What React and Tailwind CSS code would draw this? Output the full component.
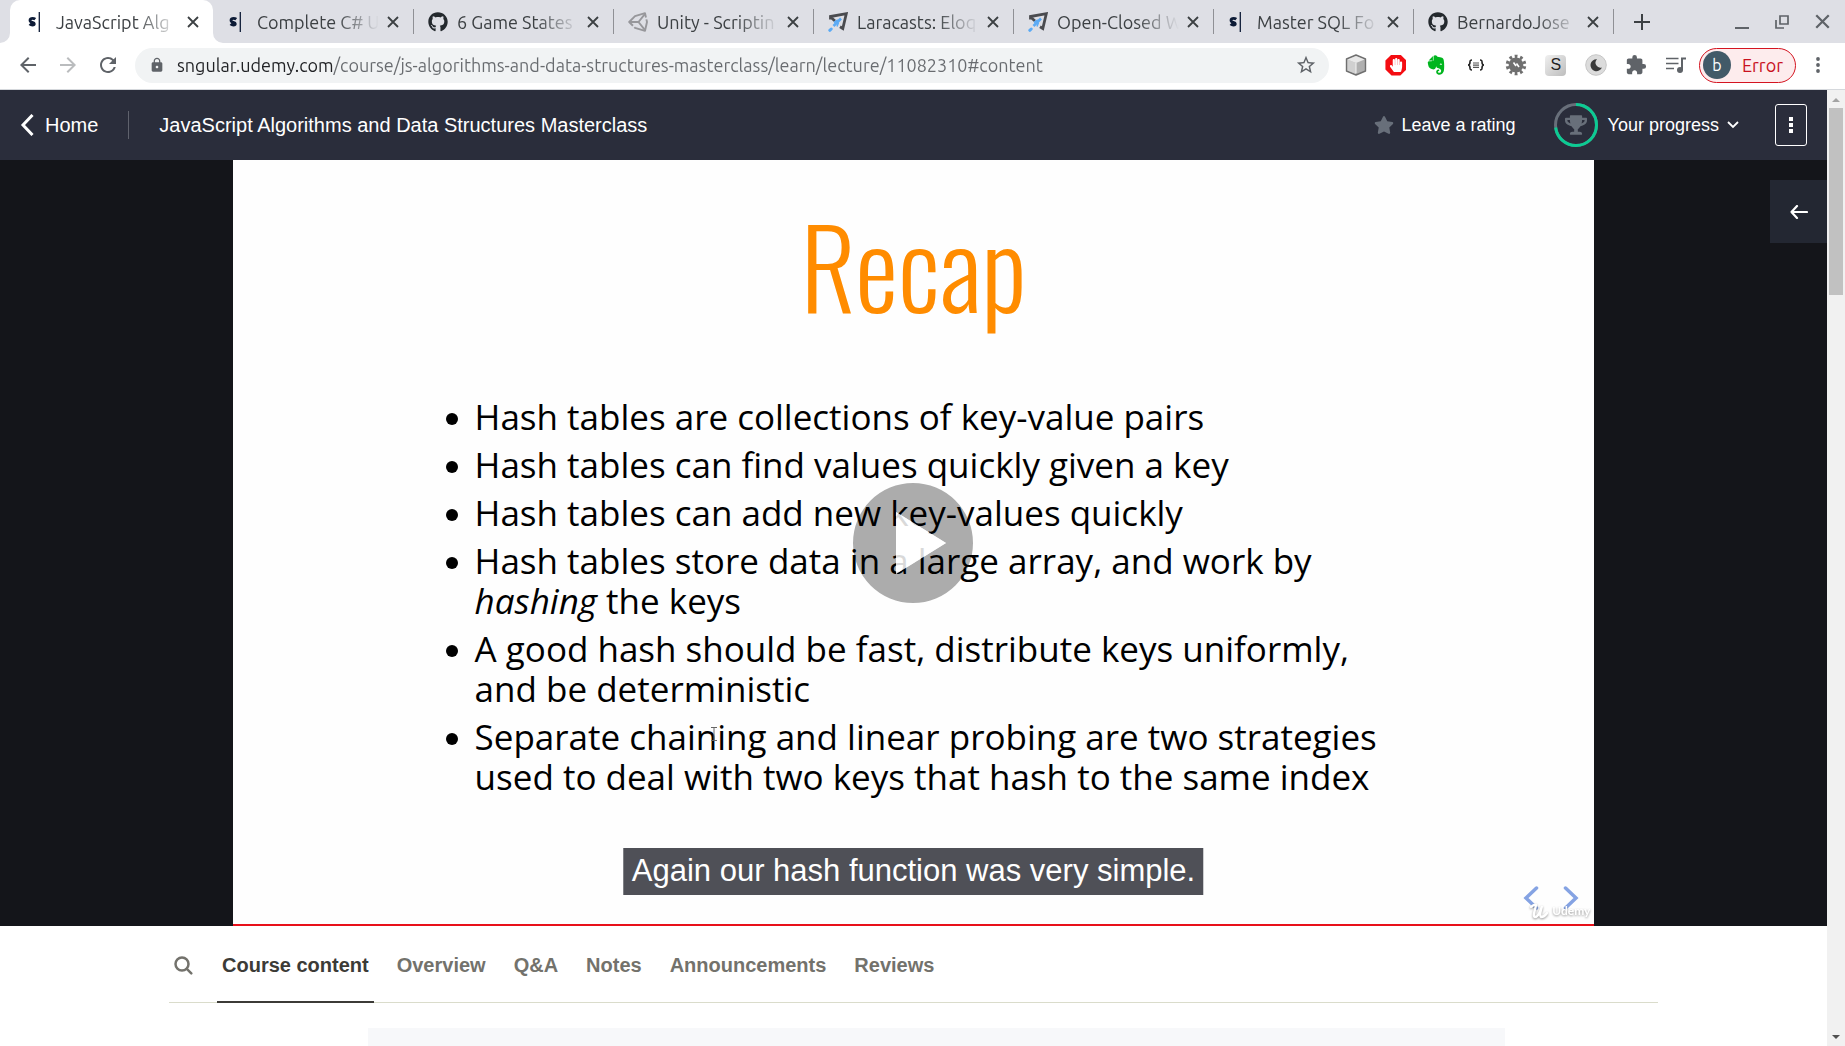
import React from "react";
import { FaGithub, FaEvernote, FaTrophy, FaStar, FaHandPaper } from "react-icons/fa";
import {
  MdArrowBack,
  MdArrowForward,
  MdRefresh,
  MdLock,
  MdStarBorder,
  MdExtension,
} from "react-icons/md";

function SngularIcon() {
  return (
    <svg viewBox="0 0 20 20" className="h-5 w-5" aria-hidden="true">
      <path d="M8.300 7.200C7.500 6.600 6.500 6.300 5.500 6.300c-1.500 0-2.500.8-2.500 2 0 2.900 4.300 1.500 4.300 3.500 0 .9-.9 1.300-1.900 1.300-1 0-2-.4-2.900-1.100" fill="none" stroke="#0d1b36" strokeWidth="2.800" />
      <path d="M12.300 0v20" stroke="#0d1b36" strokeWidth="1.300" />
    </svg>
  );
}

function UnityIcon() {
  return (
    <svg viewBox="0 0 20 20" className="h-5 w-5" fill="none" stroke="#97979b" strokeWidth="1.900" strokeLinejoin="round" aria-hidden="true">
      <path d="M1.200 10 7 4.200 17 1.200 19 10 17 18.800 7 15.800z" strokeDasharray="23 2" />
      <path d="M1.200 10h9.300M10.500 10 17 1.800M10.500 10 17 18.200" />
    </svg>
  );
}

function LaracastsIcon() {
  return (
    <svg viewBox="0 0 20 20" className="h-5 w-5" fill="none" aria-hidden="true">
      <path d="M2.500 7.500V4.500L18.300 1.700 14.800 16.500 12 14.800M2.500 5l4.500 4" stroke="#4a4b4f" strokeWidth="2.800" />
      <path d="M13 6.500 5.500 14" stroke="#5aaaf5" strokeWidth="2.600" />
      <path d="M10.500 10.500 9 14.500M9.800 8 6 10.500" stroke="#5aaaf5" strokeWidth="1.500" />
      <path d="M3.200 17 1.800 18.300" stroke="#5aaaf5" strokeWidth="3" strokeLinecap="round" />
    </svg>
  );
}

function GithubIcon() {
  return <FaGithub className="h-5 w-5 text-[#24292e]" />;
}

function Cross({ className }) {
  return (
    <svg viewBox="0 0 12 12" className={className} fill="none" stroke="currentColor" strokeWidth="1.800" aria-hidden="true">
      <path d="M1 1 11 11M11 1 1 11" />
    </svg>
  );
}

const browserTabs = [
  { title: "JavaScript Alg", Icon: SngularIcon, active: true },
  { title: "Complete C# U", Icon: SngularIcon },
  { title: "6 Game States", Icon: GithubIcon },
  { title: "Unity - Scriptin", Icon: UnityIcon },
  { title: "Laracasts: Eloq", Icon: LaracastsIcon },
  { title: "Open-Closed W", Icon: LaracastsIcon },
  { title: "Master SQL Fo", Icon: SngularIcon },
  { title: "BernardoJose", Icon: GithubIcon },
];

function BrowserTab({ tab }) {
  const { Icon, title, active } = tab;
  return (
    <div
      className={
        active
          ? "relative flex h-full w-[203px] min-w-0 items-center rounded-t-[10px] bg-white pr-[10px] pl-[17px]"
          : "relative flex h-full w-[200px] min-w-0 items-center pr-[10px] pl-[15px]"
      }
    >
      <button type="button" className="flex min-w-0 flex-1 items-center gap-[9px] text-[#3c4043]">
        <span className="shrink-0"><Icon /></span>
        <span className="min-w-0 flex-1 overflow-hidden text-left text-[18px] leading-6 whitespace-nowrap [mask-image:linear-gradient(to_right,black_65%,transparent)]">
          {title}
        </span>
      </button>
      <button type="button" aria-label={"Close " + title} className="ml-1 flex h-5 w-5 shrink-0 items-center justify-center text-[#3c4043]">
        <Cross className="h-3 w-3" />
      </button>
      {active ? (
        <>
          <svg viewBox="0 0 10 10" className="absolute bottom-0 -left-[10px] h-[10px] w-[10px]"><path d="M10 0v10H0A10 10 0 0 0 10 0" fill="#fff" /></svg>
          <svg viewBox="0 0 10 10" className="absolute -right-[10px] bottom-0 h-[10px] w-[10px]"><path d="M0 0v10h10A10 10 0 0 1 0 0" fill="#fff" /></svg>
        </>
      ) : null}
    </div>
  );
}

function TabStrip() {
  return (
    <div className="flex h-[43px] shrink-0 items-center bg-[#dedfe5] pr-[11px] pl-[10px]">
      {browserTabs.map((tab, i) => (
        <React.Fragment key={tab.title}>
          {i > 1 ? <span className="-mr-px h-[25px] w-px shrink-0 bg-[#8f9095]" /> : null}
          <BrowserTab tab={tab} />
        </React.Fragment>
      ))}
      <span className="h-[25px] w-px shrink-0 bg-[#8f9095]" />
      <button type="button" aria-label="New tab" className="ml-4 flex h-6 w-6 items-center justify-center">
        <svg viewBox="0 0 16 16" className="h-4 w-4" stroke="#3c4043" strokeWidth="2"><path d="M8 0v16M0 8h16" /></svg>
      </button>
      <div className="ml-auto flex items-center gap-4 text-[#5f6368]">
        <button type="button" aria-label="Minimize" className="flex h-6 w-6 items-center justify-center">
          <svg viewBox="0 0 14 14" className="h-[14px] w-[14px]" stroke="currentColor" strokeWidth="2"><path d="M0 13h14" /></svg>
        </button>
        <button type="button" aria-label="Restore" className="flex h-6 w-6 items-center justify-center">
          <svg viewBox="0 0 14 14" className="h-[14px] w-[14px]" fill="none" stroke="currentColor" strokeWidth="1.700"><path d="M5 1h8v8H5zM1 5v8h8" /></svg>
        </button>
        <button type="button" aria-label="Close window" className="flex h-6 w-6 items-center justify-center">
          <Cross className="h-[15px] w-[15px]" />
        </button>
      </div>
    </div>
  );
}

function CubeIcon() {
  return (
    <svg viewBox="0 0 22 22" className="h-[22px] w-[22px]" stroke="#6f6f6f" strokeWidth="1.400" strokeLinejoin="round">
      <path d="M11 1 20.500 5v12L11 21 1.500 17V5z" fill="#b0b0b0" />
      <path d="M2.500 5.500 11 9v11L2.500 16.500z" fill="#d0d0d0" stroke="none" />
      <path d="M2.500 5.500 11 2l8.500 3.500L11 9z" fill="#e8e8e8" stroke="none" />
      <path d="M11 9v10" stroke="#f4f4f4" strokeWidth="1" />
    </svg>
  );
}

function BlockIcon() {
  return (
    <span className="flex h-[21px] w-[21px] items-center justify-center bg-[#f40d12] [clip-path:polygon(29%_0,71%_0,100%_29%,100%_71%,71%_100%,29%_100%,0_71%,0_29%)]">
      <FaHandPaper className="h-[14px] w-[14px] text-white" />
    </span>
  );
}

function BracesIcon() {
  return (
    <svg viewBox="0 0 18 12" className="h-3 w-[18px]" fill="none" stroke="#222" strokeWidth="1.600">
      <path d="M5 1C3 1 3 1.500 3 3s0 3-2 3c2 0 2 1.500 2 3s0 2 2 2M13 1c2 0 2 .5 2 2s0 3 2 3c-2 0-2 1.500-2 3s0 2-2 2" />
      <path d="M6 4h6M6 6.200h6M6 8.400h6" strokeWidth="1.200" stroke="#555" />
    </svg>
  );
}

function GearIcon() {
  return (
    <svg viewBox="0 0 22 22" className="h-[22px] w-[22px]">
      <circle cx="11" cy="11" r="8.600" fill="none" stroke="#6f6f6f" strokeWidth="3.400" strokeDasharray="2.700 2.700" transform="rotate(8 11 11)" />
      <circle cx="11" cy="11" r="7.400" fill="#6f6f6f" />
      <path d="M8.500 8.500 11 12M11.500 9.500 14 13" stroke="#fff" strokeWidth="1.600" fill="none" />
    </svg>
  );
}

function MoonIcon() {
  return (
    <svg viewBox="0 0 22 22" className="h-[22px] w-[22px]">
      <circle cx="11" cy="11" r="10.300" fill="#dcdcdc" stroke="#c6c6c6" />
      <path d="M12 5.200a6 6 0 1 0 5 8.300A5 5 0 0 1 12 5.200" fill="#3b3b3b" />
    </svg>
  );
}

function QueueIcon() {
  return (
    <svg viewBox="0 0 20 16" className="h-4 w-5" fill="none" stroke="#5f6368" strokeWidth="1.700">
      <path d="M0 1.500h12.500M0 6.500h12.500M0 11.500h8" />
      <path d="M16 13V1.500h4" strokeWidth="2" />
      <circle cx="14" cy="13" r="3" fill="#5f6368" stroke="none" />
    </svg>
  );
}

const extensions = [
  ["Cube", <CubeIcon />],
  ["Ad blocker", <BlockIcon />],
  ["Web clipper", <FaEvernote className="h-[22px] w-[22px] text-[#00b51e]" />],
  ["JSON viewer", <BracesIcon />],
  ["Inspector", <GearIcon />],
  ["Stylus", <span className="flex h-[21px] w-[21px] items-center justify-center rounded bg-linear-to-br from-[#f0f0f0] to-[#bdbdbd] font-['Liberation_Sans',sans-serif] text-[16px] leading-5 text-[#222]">S</span>],
  ["Dark mode", <MoonIcon />],
  ["Extensions", <MdExtension className="h-[22px] w-[22px] text-[#5f6368]" />],
  ["Media controls", <QueueIcon />],
];

function Toolbar() {
  return (
    <div className="flex h-[47px] shrink-0 items-center border-b border-[#d5d8dc] bg-white pr-[19px] pb-[2px] pl-4">
      <div className="flex items-center gap-4 text-[#5f6368]">
        <button type="button" aria-label="Back"><MdArrowBack className="h-6 w-6" /></button>
        <button type="button" aria-label="Forward" className="text-[#babcbe]"><MdArrowForward className="h-6 w-6" /></button>
        <button type="button" aria-label="Reload"><MdRefresh className="h-6 w-6" /></button>
      </div>
      <div className="ml-[15px] flex h-[35px] flex-1 items-center rounded-full bg-[#f1f3f4] pr-3 pl-[14px] text-[#5f6368]">
        <MdLock className="h-4 w-4 shrink-0" />
        <input
          type="text"
          aria-label="Address"
          defaultValue="sngular.udemy.com/course/js-algorithms-and-data-structures-masterclass/learn/lecture/11082310#content"
          className="ml-3 min-w-0 flex-1 bg-[linear-gradient(to_right,#202124_156px,#686b6f_156px)] bg-clip-text text-[18px] leading-6 text-transparent outline-none"
        />
        <button type="button" aria-label="Bookmark"><MdStarBorder className="h-[22px] w-[22px]" /></button>
      </div>
      <div className="ml-[7px] flex items-center">
        {extensions.map(([name, icon]) => (
          <button key={name} type="button" aria-label={name} className="flex h-7 w-10 items-center justify-center">
            {icon}
          </button>
        ))}
      </div>
      <button type="button" className="ml-[3px] flex h-[35px] items-center gap-[11px] rounded-full border border-[#d41420] bg-[#fdeced] pr-3 pl-[3px] text-[18px] text-[#c9121f]">
        <span className="flex h-7 w-7 items-center justify-center rounded-full bg-[#425a68] text-[16px] text-white">b</span>
        Error
      </button>
      <button type="button" aria-label="Menu" className="ml-[14px] flex h-6 w-4 items-center justify-center">
        <svg viewBox="0 0 4 16" className="h-4 w-1" fill="#5f6368"><circle cx="2" cy="2" r="1.900" /><circle cx="2" cy="8" r="1.900" /><circle cx="2" cy="14" r="1.900" /></svg>
      </button>
    </div>
  );
}

function CourseHeader() {
  return (
    <header className="flex h-[70px] shrink-0 items-center bg-[#2a2d3b] pr-5 pl-5 text-white">
      <a href="#home" className="flex items-center gap-[11px] text-[20px] leading-6">
        <svg viewBox="0 0 14 22" className="h-[22px] w-[14px]" fill="none" stroke="#fff" strokeWidth="3"><path d="M12.500 1 3 11l9.500 10" /></svg>
        Home
      </a>
      <span className="ml-[30px] h-7 w-px bg-[#5f626d]" />
      <a href="#course" className="ml-[30px] text-[20px] leading-6">JavaScript Algorithms and Data Structures Masterclass</a>
      <button type="button" className="ml-auto flex items-center gap-2 text-[18px] leading-6">
        <FaStar className="h-5 w-5 text-[#686f7a]" />
        Leave a rating
      </button>
      <button type="button" className="ml-[38px] flex items-center gap-[10px] text-[18px] leading-6">
        <span className="grid h-[44px] w-[44px] place-items-center">
          <svg viewBox="0 0 44 44" className="col-start-1 row-start-1 h-[44px] w-[44px] -rotate-90" fill="none" strokeWidth="3">
            <circle cx="22" cy="22" r="20.500" stroke="#686f7a" />
            <circle cx="22" cy="22" r="20.500" stroke="#0ccb93" pathLength="100" strokeDasharray="73 27" />
          </svg>
          <FaTrophy className="col-start-1 row-start-1 h-5 w-[22px] text-[#686f7a]" />
        </span>
        <span className="flex items-center gap-2">
          Your progress
          <svg viewBox="0 0 12 8" className="h-2 w-3" fill="none" stroke="#fff" strokeWidth="1.800"><path d="M1 1l5 5 5-5" /></svg>
        </span>
      </button>
      <button type="button" aria-label="More options" className="ml-9 flex h-[42px] w-8 items-center justify-center rounded-[3px] border border-white">
        <svg viewBox="0 0 4 16" className="h-4 w-1" fill="#fff"><path d="M0 0h4v4H0zM0 6h4v4H0zM0 12h4v4H0z" /></svg>
      </button>
    </header>
  );
}

const points = [
  ["Hash tables are collections of key-value pairs"],
  ["Hash tables can find values quickly given a key"],
  ["Hash tables can add new key-values quickly"],
  ["Hash tables store data in a large array, and work by", <><em>hashing</em> the keys</>],
  ["A good hash should be fast, distribute keys uniformly,", "and be deterministic"],
  ["Separate chaining and linear probing are two strategies", "used to deal with two keys that hash to the same index"],
];

function Slide() {
  return (
    <div className="relative mx-auto flex aspect-video h-full flex-col bg-[#fefefe]">
      <h1 className="pt-8 text-center font-['Oswald','Liberation_Sans_Narrow',sans-serif] text-[108px] leading-[144px] font-[350] text-[#ff8c00]">
        Recap
      </h1>
      <ul className="mt-[61px] flex flex-col gap-2 pl-[213px] font-['Open_Sans','Noto_Sans',sans-serif] text-[35px] leading-10 text-black">
        {points.map((lines, i) => (
          <li key={i} className="flex gap-[17px]">
            <span className="mt-4 h-3 w-3 shrink-0 rounded-full bg-black" />
            <p>
              {lines.map((line, j) => (
                <span key={j} className="block whitespace-nowrap">{line}</span>
              ))}
            </p>
          </li>
        ))}
      </ul>
      <svg viewBox="0 0 6 14" className="absolute top-[567px] left-[478px] h-[14px] w-[6px]" fill="none" stroke="#666" strokeWidth="1"><path d="M0 .5h6M3 .5v13M0 13.500h6" /></svg>
      <button type="button" aria-label="Play" className="absolute inset-0 m-auto h-[120px] w-[120px] rounded-full">
        <svg viewBox="0 0 120 120" className="h-[120px] w-[120px]">
          <path d="M60 0a60 60 0 1 0 0 120A60 60 0 1 0 60 0M43 29v62l50-31z" fill="#000" fillOpacity="0.320" fillRule="evenodd" />
          <path d="M43 29v62l50-31z" fill="#fff" fillOpacity="0.850" />
        </svg>
      </button>
      <p className="absolute bottom-[31px] left-1/2 -translate-x-1/2 bg-[#4f5057] px-2 pb-px text-[31px] leading-[46px] whitespace-nowrap text-white">
        Again our hash function was very simple.
      </p>
      <div className="absolute right-[15px] bottom-4 flex gap-6">
        <button type="button" aria-label="Previous slide">
          <svg viewBox="0 0 16 24" className="h-6 w-4" fill="none" stroke="#85a3e3" strokeWidth="3.500" strokeLinecap="round"><path d="M13.500 2 3 12l10.500 10" /></svg>
        </button>
        <button type="button" aria-label="Next slide">
          <svg viewBox="0 0 16 24" className="h-6 w-4" fill="none" stroke="#85a3e3" strokeWidth="3.500" strokeLinecap="round"><path d="M2.500 2 13 12 2.500 22" /></svg>
        </button>
      </div>
      <div className="absolute right-1 bottom-[7px] flex items-center gap-1 font-['Lato',sans-serif] text-[12px] leading-4 font-bold text-white drop-shadow-[0_1px_1px_rgba(0,0,0,0.4)]">
        <svg viewBox="0 0 18 16" className="h-4 w-[18px]" fill="none" stroke="#fff" strokeWidth="2.400" strokeLinecap="round"><path d="M1 4c2-2 5-3 5-2 0 2-4 12-1 12 4 0 6-8 7-11-1 4-3 10-1 11 2 0 4-1 6-4" /></svg>
        Udemy
      </div>
      <div className="absolute inset-x-0 bottom-0 h-[2px] bg-[#e8101a]" />
    </div>
  );
}

function Player() {
  return (
    <section className="relative h-[calc(100vh-280px)] shrink-0 bg-[#14151a]">
      <Slide />
      <button type="button" aria-label="Open sidebar" className="absolute top-5 right-0 flex h-[63px] w-[57px] items-center justify-center bg-[#232732]">
        <svg viewBox="0 0 18 14" className="h-[14px] w-[18px]" fill="none" stroke="#fff" strokeWidth="2.200" strokeLinecap="round" strokeLinejoin="round"><path d="M17 7H1.500M7 1 1.500 7 7 13" /></svg>
      </button>
    </section>
  );
}

const sections = ["Course content", "Overview", "Q&A", "Notes", "Announcements", "Reviews"];

function CourseNav() {
  return (
    <div className="mx-auto w-full max-w-[1489px]">
      <nav className="flex h-[77px] items-stretch border-b border-[#dadccb] text-[20px] leading-6 font-bold text-[#73726c]">
        <button type="button" aria-label="Search" className="w-[28px] pt-[3px] pl-[5px]">
          <svg viewBox="0 0 19 19" className="h-[19px] w-[19px]" fill="none" stroke="#73726c" strokeWidth="2.500" strokeLinecap="round"><circle cx="8" cy="8" r="6.500" /><path d="M12.800 12.800 17.300 17.300" /></svg>
        </button>
        <div className="ml-5 flex gap-[18px]">
          {sections.map((name, i) => (
            <button
              key={name}
              type="button"
              className={i === 0 ? "-mb-px border-b-2 border-[#3c3b37] px-[5px] pt-[3px] text-[#3c3b37]" : "-mb-px border-b-2 border-transparent px-[5px] pt-[3px]"}
            >
              {name}
            </button>
          ))}
        </div>
      </nav>
      <div className="mt-[25px] mr-[153px] ml-[199px] h-[18px] bg-[#f7f8fa]" />
    </div>
  );
}

function ScrollBar() {
  return (
    <div className="flex w-[18px] shrink-0 flex-col items-center bg-[#f1f1f1]">
      <svg viewBox="0 0 18 18" className="h-[18px] w-[18px]"><path d="M9 8l4 4H5z" fill="#a3a3a3" /></svg>
      <div className="h-[187px] w-[14px] bg-[#c1c1c1]" />
      <svg viewBox="0 0 18 18" className="mt-auto h-[18px] w-[18px]"><path d="M9 11l4-4H5z" fill="#505050" /></svg>
    </div>
  );
}

export default function App() {
  return (
    <div className="flex h-screen flex-col overflow-hidden bg-white font-['Liberation_Sans',Arial,sans-serif]">
      <div className="shrink-0 font-['Ubuntu','Noto_Sans',sans-serif]">
        <TabStrip />
        <Toolbar />
      </div>
      <div className="flex min-h-0 flex-1">
        <main className="flex min-w-0 flex-1 flex-col overflow-hidden">
          <CourseHeader />
          <Player />
          <CourseNav />
        </main>
        <ScrollBar />
      </div>
    </div>
  );
}
